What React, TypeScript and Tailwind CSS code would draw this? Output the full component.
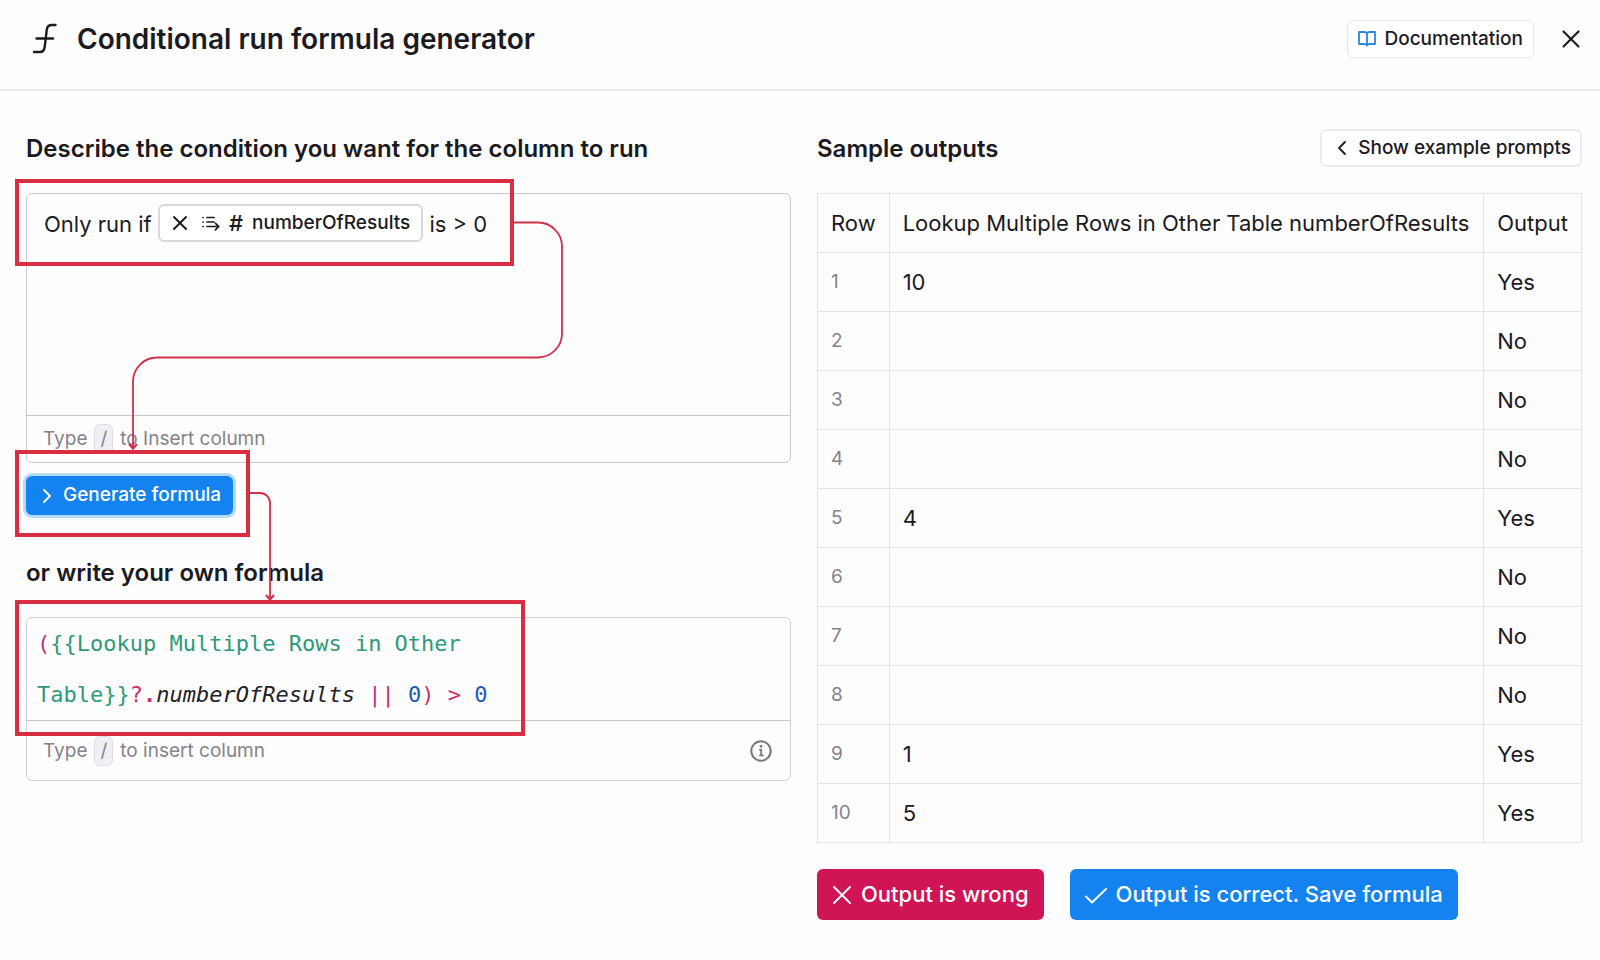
import React from "react";
import { ChevronLeft, ChevronRight, X } from "lucide-react";

interface SampleRow {
  row: number;
  value: string;
  output: "Yes" | "No";
}

const SAMPLE_ROWS: SampleRow[] = [
  { row: 1, value: "10", output: "Yes" },
  { row: 2, value: "", output: "No" },
  { row: 3, value: "", output: "No" },
  { row: 4, value: "", output: "No" },
  { row: 5, value: "4", output: "Yes" },
  { row: 6, value: "", output: "No" },
  { row: 7, value: "", output: "No" },
  { row: 8, value: "", output: "No" },
  { row: 9, value: "1", output: "Yes" },
  { row: 10, value: "5", output: "Yes" },
];

const FormulaIcon = () => (
  <svg width="25" height="32" viewBox="0 0 25 32" fill="none" stroke="currentColor" strokeWidth="2.4" strokeLinecap="round">
    <path d="M23.5 2H20c-3.5 0-4.9 1.5-5.2 4.5L12.7 24c-.4 3.600-1.800 5-5 5H2" />
    <path d="M4.500 15.500h16.500" />
  </svg>
);

const BookIcon = () => (
  <svg width="18" height="16" viewBox="0 0 18 16" fill="none" stroke="currentColor" strokeWidth="1.8" strokeLinejoin="round">
    <path d="M9 2.8C8.4 1.5 7.5 1 6.5 1H1v12h5.5c1 0 1.9.3 2.5 1.5.6-1.2 1.5-1.5 2.5-1.5H17V1h-5.5C10.5 1 9.6 1.5 9 2.8v11.7" />
  </svg>
);

const LookupIcon = () => (
  <svg width="18" height="16" viewBox="0 0 18 16" fill="none" stroke="currentColor" strokeWidth="1.7" strokeLinecap="round" strokeLinejoin="round">
    <path d="M5 2.5H12M5 7H12M5 11.5h11.7M13.5 8.3l3.3 3.2-3.3 3.3" />
    <path d="M1 2.5h.1M1 7h.1M1 11.5h.1" />
  </svg>
);

const CrossIcon = () => (
  <svg width="20" height="20" viewBox="0 0 20 20" fill="none" stroke="currentColor" strokeWidth="1.9" strokeLinecap="round">
    <path d="M2 2l16 16M18 2L2 18" />
  </svg>
);

const TickIcon = () => (
  <svg width="22" height="20" viewBox="0 0 22 20" fill="none" stroke="currentColor" strokeWidth="1.9" strokeLinecap="round" strokeLinejoin="round">
    <path d="M1 11.5l6 6L21 4" />
  </svg>
);

const InfoIcon = () => (
  <svg width="22" height="22" viewBox="0 0 22 22" fill="none" stroke="currentColor" strokeWidth="2" strokeLinecap="round">
    <circle cx="11" cy="11" r="9.7" />
    <path d="M9.8 9.8h1.4v5.2M10 15.4h2.8" strokeWidth="1.7" />
    <circle cx="11" cy="6.3" r="1.4" fill="currentColor" stroke="none" />
  </svg>
);

// red boxes and arrows that walk through the steps
const Annotations = () => (
  <svg
    className="pointer-events-none absolute top-0 left-0"
    width="600"
    height="780"
    viewBox="0 0 600 780"
    fill="none"
    stroke="#d92d41"
    aria-hidden="true"
  >
    <g strokeWidth="4">
      <rect x="17" y="90" width="495" height="83" />
      <rect x="17" y="361" width="231" height="83" />
      <rect x="17" y="511" width="506" height="132" />
    </g>
    <g strokeWidth="1.8" stroke="#cf3247">
      <path d="M514 131.5h24a24 24 0 0 1 24 24v87a24 24 0 0 1-24 24H157a24 24 0 0 0-24 24V357" />
      <path d="M129 353l4 4.5 4-4.5" strokeWidth="2.2" />
      <path d="M250 402h10a10 10 0 0 1 10 10v96" />
      <path d="M266 504l4 4.5 4-4.5" strokeWidth="2.2" />
    </g>
  </svg>
);

const InsertHint = ({ text }: { text: string }) => (
  <p className="flex items-center gap-[7px] text-[19px] leading-7 text-[#85838a]">
    Type
    <kbd className="rounded-md border border-[#dedbe2] bg-[#f1eff4] px-[5px] font-[Inter,sans-serif] text-[19px] leading-7">
      /
    </kbd>
    {text}
  </p>
);

const App: React.FC = () => {
  return (
    <div className="min-h-screen bg-[#fefdfe] font-[Inter,sans-serif] text-[#1b1a1f]">
      <header className="flex items-center border-b-2 border-[#ececee] pt-[19px] pr-[14px] pb-[30px] pl-8">
        <FormulaIcon />
        <h1 className="ml-5 text-[28px] leading-10 font-semibold">
          Conditional run formula generator
        </h1>
        <a
          href="#docs"
          className="ml-auto flex h-[38px] items-center gap-2 rounded-md border border-[#e9e6ec] bg-white px-[10px] text-[19px] font-medium"
        >
          <span className="text-[#2b86dc]">
            <BookIcon />
          </span>
          Documentation
        </a>
        <button type="button" aria-label="Close" className="ml-[22px]">
          <X size={30} strokeWidth={1.7} />
        </button>
      </header>

      <main className="grid grid-cols-2 gap-[26px] pr-[18px] pl-[26px]">
        <section className="relative -ml-[26px] pt-[38px] pl-[26px]">
          <h2 id="condition-label" className="text-[24px] leading-10 font-semibold">
            Describe the condition you want for the column to run
          </h2>
          <div className="mt-6 rounded-md border border-[#c9c6cd]">
            <div
              role="textbox"
              aria-labelledby="condition-label"
              contentEditable
              suppressContentEditableWarning
              className="h-[221px] px-[17px] pt-[10px] text-[22px] leading-10 outline-none"
            >
              Only run if{" "}
              <span
                contentEditable={false}
                className="inline-flex h-[38px] items-center rounded-md border-2 border-[#dad7de] bg-white pr-[11px] pl-2 align-top text-[19px] font-medium"
              >
                <button type="button" aria-label="Remove column" className="mr-[10px]">
                  <X size={24} strokeWidth={1.9} />
                </button>
                <LookupIcon />
                <span className="mx-[9px] text-[22px]">#</span>
                numberOfResults
              </span>{" "}
              is &gt; 0
            </div>
            <div className="border-t border-[#c9c6cd] px-4 py-2">
              <InsertHint text="to Insert column" />
            </div>
          </div>
          <button
            type="button"
            className="mt-[13px] flex h-[39px] items-center rounded-md bg-[#1483f0] pr-3 pl-[9px] text-[19px] font-medium text-white ring-3 ring-[#b5dafb]"
          >
            <ChevronRight size={24} strokeWidth={1.8} />
            <span className="ml-1">Generate formula</span>
          </button>

          <h2 id="formula-label" className="mt-[38px] text-[24px] leading-10 font-semibold">
            or write your own formula
          </h2>
          <div className="mt-6 rounded-md border border-[#d2cfd6]">
            <div
              role="textbox"
              aria-labelledby="formula-label"
              contentEditable
              suppressContentEditableWarning
              spellCheck={false}
              className="px-[10px] font-['DejaVu_Sans_Mono',monospace] text-[22px] leading-[51px] text-[#2d9a78] outline-none"
            >
              <span className="text-[#c9316b]">(</span>
              {"{{Lookup Multiple Rows in Other"}
              <br />
              {"Table}}"}
              <span className="text-[#c9316b]">
                ?<b>.</b>
              </span>
              <i className="text-[#222127]">numberOfResults</i>
              <span className="text-[#c9316b]"> || </span>
              <span className="text-[#1c58b8]">0</span>
              <span className="text-[#c9316b]">) &gt; </span>
              <span className="text-[#1c58b8]">0</span>
            </div>
            <div className="flex items-center justify-between border-t border-[#c9c6cd] pt-[15px] pr-[18px] pb-[14px] pl-4">
              <InsertHint text="to insert column" />
              <button type="button" aria-label="Formula help" className="text-[#77757b]">
                <InfoIcon />
              </button>
            </div>
          </div>
          <Annotations />
        </section>

        <section className="pt-[38px]">
          <div className="flex items-start justify-between">
            <h2 className="text-[24px] leading-10 font-semibold">Sample outputs</h2>
            <button
              type="button"
              className="flex h-[38px] items-center rounded-md border-2 border-[#eeebf1] bg-white pr-[9px] pl-2 text-[19px] font-medium"
            >
              <ChevronLeft size={24} strokeWidth={1.8} />
              <span className="ml-1">Show example prompts</span>
            </button>
          </div>

          <table className="mt-6 w-full border-collapse text-left text-[22px] leading-8 whitespace-nowrap [&_td]:border [&_td]:border-[#e4e1e7] [&_td]:px-[13px] [&_th]:border [&_th]:border-[#e4e1e7] [&_th]:px-[13px] [&_th]:font-normal">
            <thead>
              <tr className="h-[59px]">
                <th>Row</th>
                <th className="w-full">Lookup Multiple Rows in Other Table numberOfResults</th>
                <th>Output</th>
              </tr>
            </thead>
            <tbody>
              {SAMPLE_ROWS.map(({ row, value, output }) => (
                <tr key={row} className="h-[59px]">
                  <td className="text-[19px] text-[#85838a]">{row}</td>
                  <td>{value}</td>
                  <td>{output}</td>
                </tr>
              ))}
            </tbody>
          </table>

          <div className="mt-[26px] flex gap-[26px] text-[22px] font-medium text-white">
            <button type="button" className="flex h-[51px] items-center gap-[9px] rounded-md bg-[#d01556] px-[15px]">
              <CrossIcon />
              Output is wrong
            </button>
            <button type="button" className="flex h-[51px] items-center gap-[9px] rounded-md bg-[#1483f0] px-[15px]">
              <TickIcon />
              Output is correct. Save formula
            </button>
          </div>
        </section>
      </main>
    </div>
  );
};

export default App;
